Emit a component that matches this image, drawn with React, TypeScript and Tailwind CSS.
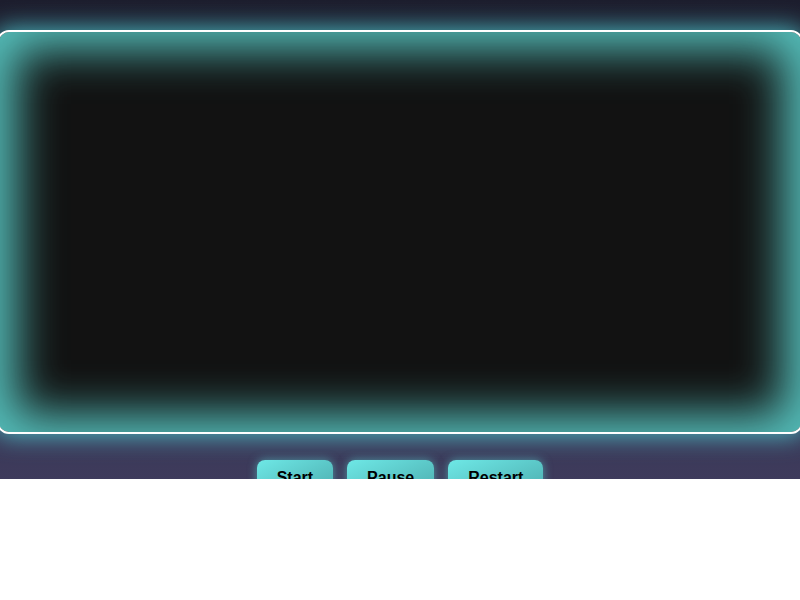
export default function App() {
  return (
    <div
      className="h-[479px] overflow-hidden flex flex-col items-center bg-gradient-to-b from-[#1d1d2d] to-[#3e3b5c]"
      style={{ fontFamily: '"Liberation Sans", Arial, sans-serif' }}
    >
      <div className="shrink-0 mt-[30px] w-[806px] h-[404px] rounded-[12px] border-2 border-white bg-[#121212] shadow-[0_0_24px_2px_rgba(80,205,210,0.85),inset_0_0_45px_18px_rgba(88,200,196,0.95)]" />
      <div className="mt-[26px] flex gap-[14px]">
        {["Start", "Pause", "Restart"].map((label) => (
          <button
            key={label}
            className="px-5 pt-1.5 pb-2.5 rounded-lg text-base font-bold text-black bg-gradient-to-br from-[#6ee8e6] to-[#4aa9ab] shadow-[0_0_10px_rgba(90,210,210,0.6)]"
          >
            {label}
          </button>
        ))}
      </div>
    </div>
  );
}
